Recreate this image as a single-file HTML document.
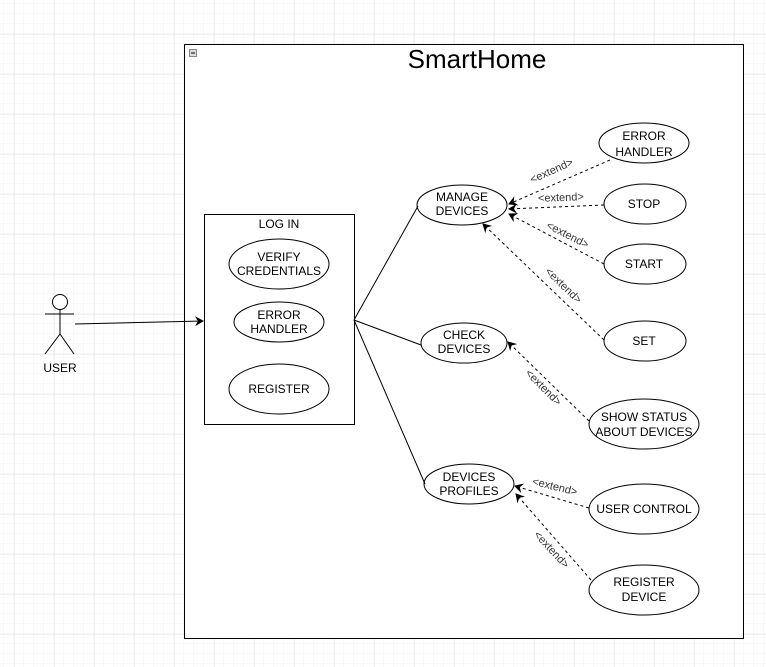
<!DOCTYPE html>
<html><head><meta charset="utf-8"><style>
html,body{margin:0;padding:0;background:#fff;}
svg{display:block;font-family:"Liberation Sans",sans-serif;}
</style></head><body>
<svg width="766" height="667" viewBox="0 0 766 667" xmlns="http://www.w3.org/2000/svg">
<defs>
<pattern id="minor" width="10" height="10" patternUnits="userSpaceOnUse" x="4" y="4">
<path d="M10 0V10M0 10H10" fill="none" stroke="#f1f1f1" stroke-width="1"/>
</pattern>
<pattern id="major" width="40" height="40" patternUnits="userSpaceOnUse" x="-25.5" y="-5.5">
<path d="M40 0V40M0 40H40" fill="none" stroke="#e2e2e2" stroke-width="1"/>
</pattern>
<marker id="ah" markerWidth="10" markerHeight="10" refX="8" refY="5" orient="auto" markerUnits="userSpaceOnUse">
<path d="M0,0 L9,5 L0,10 L3,5 Z" fill="#000"/>
</marker>
</defs>
<rect width="766" height="667" fill="url(#minor)"/>
<rect width="766" height="667" fill="url(#major)"/>

<rect x="184.5" y="44.5" width="559" height="594" fill="#fff" stroke="#000"/>
<rect x="189.5" y="49.5" width="7" height="7" fill="#ddd" stroke="#888"/>
<line x1="191" y1="53" x2="195" y2="53" stroke="#000"/>
<text x="477" y="68" font-size="26" text-anchor="middle">SmartHome</text>

<rect x="204.5" y="214.5" width="150" height="210" fill="#fff" stroke="#000"/>
<text x="279" y="228" font-size="12" text-anchor="middle">LOG IN</text>

<g fill="#fff" stroke="#000">
<ellipse cx="279" cy="264" rx="50" ry="25"/>
<ellipse cx="279" cy="322" rx="45" ry="20"/>
<ellipse cx="279" cy="389" rx="50" ry="25"/>
<ellipse cx="462" cy="205" rx="45" ry="20"/>
<ellipse cx="464" cy="343" rx="43" ry="20"/>
<ellipse cx="469" cy="484" rx="45" ry="20"/>
<ellipse cx="644" cy="143" rx="45" ry="20"/>
<ellipse cx="645" cy="204" rx="41" ry="20"/>
<ellipse cx="645" cy="264" rx="41" ry="20"/>
<ellipse cx="645" cy="341" rx="41" ry="20"/>
<ellipse cx="644" cy="424" rx="55" ry="25"/>
<ellipse cx="644" cy="509" rx="55" ry="25"/>
<ellipse cx="644" cy="590" rx="55" ry="25"/>
</g>

<g font-size="12" text-anchor="middle" fill="#000">
<text x="279" y="261">VERIFY</text><text x="279" y="275">CREDENTIALS</text>
<text x="279" y="319">ERROR</text><text x="279" y="333">HANDLER</text>
<text x="279" y="393">REGISTER</text>
<text x="462" y="201">MANAGE</text><text x="462" y="215">DEVICES</text>
<text x="464" y="339">CHECK</text><text x="464" y="353">DEVICES</text>
<text x="469" y="481">DEVICES</text><text x="469" y="495">PROFILES</text>
<text x="644" y="140">ERROR</text><text x="644" y="156">HANDLER</text>
<text x="644" y="208">STOP</text>
<text x="644" y="268">START</text>
<text x="644" y="345">SET</text>
<text x="644" y="421">SHOW STATUS</text><text x="644" y="436">ABOUT DEVICES</text>
<text x="644" y="513">USER CONTROL</text>
<text x="644" y="586">REGISTER</text><text x="644" y="601">DEVICE</text>
<text x="60" y="372">USER</text>
</g>

<g stroke="#000" fill="none">
<circle cx="60" cy="302" r="7.5" fill="#fff"/>
<line x1="45" y1="314" x2="74" y2="314"/>
<line x1="60" y1="310" x2="60" y2="334"/>
<line x1="60" y1="334" x2="45" y2="354"/>
<line x1="60" y1="334" x2="74" y2="354"/>
<line x1="75" y1="324" x2="203" y2="321" marker-end="url(#ah)"/>
<line x1="354" y1="320" x2="418" y2="206"/>
<line x1="354" y1="320" x2="421" y2="345"/>
<line x1="354" y1="320" x2="425" y2="484"/>
</g>

<g stroke="#000" fill="none" stroke-dasharray="3,3">
<line x1="610" y1="160" x2="509" y2="204" marker-end="url(#ah)"/>
<line x1="604" y1="205" x2="509" y2="209" marker-end="url(#ah)"/>
<line x1="604" y1="264" x2="509" y2="214" marker-end="url(#ah)"/>
<line x1="604" y1="340" x2="483" y2="224" marker-end="url(#ah)"/>
<line x1="589" y1="421" x2="508" y2="342" marker-end="url(#ah)"/>
<line x1="589" y1="508" x2="515" y2="486" marker-end="url(#ah)"/>
<line x1="591" y1="580" x2="516" y2="494" marker-end="url(#ah)"/>
</g>

<g font-size="11" fill="#333" text-anchor="middle">
<text transform="translate(553,174) rotate(-24)">&lt;extend&gt;</text>
<text transform="translate(561,201) rotate(-2)">&lt;extend&gt;</text>
<text transform="translate(566,238) rotate(27)">&lt;extend&gt;</text>
<text transform="translate(561,288) rotate(44)">&lt;extend&gt;</text>
<text transform="translate(541,390) rotate(45)">&lt;extend&gt;</text>
<text transform="translate(554,490) rotate(14)">&lt;extend&gt;</text>
<text transform="translate(549,552) rotate(47)">&lt;extend&gt;</text>
</g>
</svg>
</body></html>
